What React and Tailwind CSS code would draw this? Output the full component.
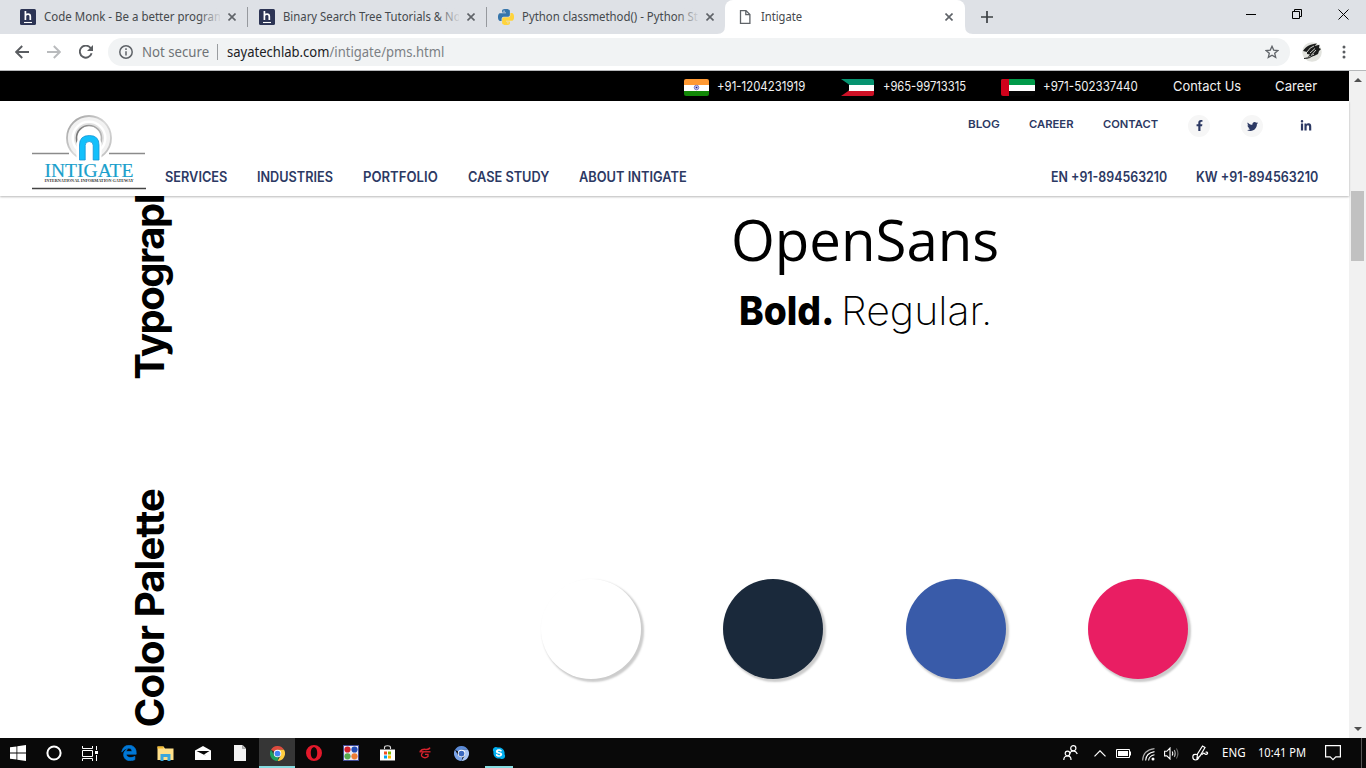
import { useLayoutEffect, useRef } from "react";
import { FaEdgeLegacy, FaFacebookF, FaLinkedinIn, FaSkype, FaTwitter } from "react-icons/fa";

/* Stretches one line of text so that it fills the width of its box. */
function Fit({ className = "", children }) {
  const box = useRef(null);
  const ink = useRef(null);
  useLayoutEffect(() => {
    const natural = ink.current.offsetWidth;
    ink.current.style.transform = `scaleX(${box.current.clientWidth / natural})`;
  }, [children]);
  return (
    <span ref={box} className={`block shrink-0 whitespace-nowrap ${className}`}>
      <span ref={ink} className="inline-block origin-left">{children}</span>
    </span>
  );
}

const PY =
  "M14.25.18l.9.2.73.26.59.3.45.32.34.34.25.34.16.33.1.3.04.26.02.2-.01.13V8.5l-.05.63-.13.55-.21.46-.26.38-.3.31-.33.25-.35.19-.35.14-.33.1-.3.07-.26.04-.21.02H8.77l-.69.05-.59.14-.5.22-.41.27-.33.32-.27.35-.2.36-.15.37-.1.35-.07.32-.04.27-.02.21v3.06H3.17l-.21-.03-.28-.07-.32-.12-.35-.18-.36-.26-.36-.36-.35-.46-.32-.59-.28-.73-.21-.88-.14-1.05-.05-1.23.06-1.22.16-1.04.24-.87.32-.71.36-.57.4-.44.42-.33.42-.24.4-.16.36-.1.32-.05.24-.01h.16l.06.01h8.16v-.83H6.18l-.01-2.75-.02-.37.05-.34.11-.31.17-.28.25-.26.31-.23.38-.2.44-.18.51-.15.58-.12.64-.1.71-.06.77-.04.84-.02 1.27.05z M9.1 2.1a1.1 1.1 0 1 0 0 2.2a1.1 1.1 0 1 0 0-2.2z";

function PythonIcon() {
  return (
    <svg width="16" height="16" viewBox="0 0 24 24" fillRule="evenodd">
      <path d={PY} fill="#3776ab" />
      <path d={PY} fill="#ffd43b" transform="rotate(180 12 12)" />
    </svg>
  );
}

function HIcon() {
  return (
    <svg width="16" height="16" viewBox="0 0 16 16">
      <rect width="16" height="16" rx="1.5" fill="#2c3454" />
      <path d="M5.4 2v9M5.4 6.8Q6 5.2 8 5.2q2.3 0 2.3 2.3V11" fill="none" stroke="#fff" strokeWidth="1.7" />
      <path d="M4 13.5h8" stroke="#fff" strokeWidth="1.1" />
    </svg>
  );
}

function FileIcon() {
  return (
    <svg width="16" height="16" viewBox="0 0 16 16" fill="none" stroke="#5f6368" strokeWidth="1.3">
      <path d="M3.5 1.6H9l3.9 3.9v8.9H3.5zM8.8 1.8v3.9h3.9" />
    </svg>
  );
}

function CloseX() {
  return (
    <svg width="8" height="8" viewBox="0 0 8 8" stroke="#5f6368" strokeWidth="1.6" className="shrink-0">
      <path d="M.5.5l7 7M7.500.5l-7 7" />
    </svg>
  );
}

function Tab({ icon, active, title, titleClass, divider }) {
  return (
    <div className={`relative flex h-[34px] shrink-0 items-center pl-[12px] ${active ? "w-[240px] rounded-t-lg bg-white" : "w-[239px]"}`}>
      {icon}
      <div className="ml-[8px] h-[20px] w-[176px] overflow-hidden">
        <Fit className={`text-[12px] leading-[20px] text-[#45494d] ${titleClass}`}>{title}</Fit>
      </div>
      {!active && <div className="absolute left-[190px] top-[7px] h-[20px] w-[24px] bg-linear-to-r from-transparent to-[#dee1e6]" />}
      <div className="relative ml-[8px]"><CloseX /></div>
      {divider && <div className="absolute -right-px top-[7px] h-[20px] w-px bg-[#96999e]" />}
      {active && (
        <>
          <svg className="absolute -left-[8px] bottom-0" width="8" height="8"><path d="M8 0v8H0Q8 8 8 0" fill="#fff" /></svg>
          <svg className="absolute -right-[8px] bottom-0" width="8" height="8"><path d="M0 0v8h8Q0 8 0 0" fill="#fff" /></svg>
        </>
      )}
    </div>
  );
}

function TabStrip() {
  return (
    <div className="flex h-[34px] bg-[#dee1e6] pl-[8px]">
      <Tab icon={<HIcon />} title="Code Monk - Be a better program" titleClass="w-[181px]" divider />
      <Tab icon={<HIcon />} title="Binary Search Tree Tutorials & Note" titleClass="w-[188px]" divider />
      <Tab icon={<PythonIcon />} title="Python classmethod() - Python Stu" titleClass="w-[183px]" />
      <Tab icon={<FileIcon />} title="Intigate" titleClass="w-[41px]" active />
      <svg className="ml-[16px] mt-[11px]" width="12" height="12" stroke="#3c4043" strokeWidth="1.7"><path d="M6 0v12M0 6h12" /></svg>
      <div className="ml-auto mr-[17px] mt-[9px] flex gap-[36px]">
        <svg width="10" height="11" stroke="#000"><path d="M0 5.500h10" /></svg>
        <svg width="10" height="11" stroke="#000" fill="none"><path d="M.5 2.500h7v7h-7zM2.500 2.500v-2h7v7h-2" /></svg>
        <svg width="11" height="11" stroke="#000"><path d="M.5.5l10 10M10.500.5l-10 10" /></svg>
      </div>
    </div>
  );
}

function Toolbar() {
  return (
    <div className="flex h-[36px] items-center bg-white pl-[15px]">
      <svg width="14" height="14" fill="none" stroke="#5a5d61" strokeWidth="1.9"><path d="M14 7H1.500M7.200 1L1.200 7l6 6" /></svg>
      <svg className="ml-[18px]" width="14" height="14" fill="none" stroke="#b9bbbd" strokeWidth="1.9"><path d="M0 7h12.500M6.800 1l6 6-6 6" /></svg>
      <svg className="ml-[18px]" width="14" height="14" viewBox="0 0 14 14" fill="none" stroke="#5a5d61" strokeWidth="1.9">
        <path d="M12.600 8.300A6 6 0 1 1 11.600 3l.9 1" /><path d="M14 0v6H8z" fill="#5a5d61" stroke="none" />
      </svg>
      <div className="ml-[15px] flex h-[28px] w-[1182px] items-center rounded-full bg-[#f1f3f4] pl-[11px]">
        <svg width="14" height="14" viewBox="0 0 14 14" fill="none" stroke="#5f6368" strokeWidth="1.5">
          <circle cx="7" cy="7" r="6.2" /><path d="M7 6.200v4.200M7 3.300v1.600" />
        </svg>
        <Fit className="ml-[9px] w-[67px] text-[14px] leading-[20px] text-[#6f7377]">Not secure</Fit>
        <div className="ml-[8px] h-[16px] w-px bg-[#9a9da0]" />
        <Fit className="ml-[9px] w-[217px] text-[14px] leading-[20px] text-[#7c8084]">
          <span className="text-[#202124]">sayatechlab.com</span>/intigate/pms.html
        </Fit>
        <svg className="ml-auto mr-[11px]" width="14" height="14" viewBox="0 0 14 14" fill="none" stroke="#5f6368" strokeWidth="1.3">
          <path d="M7 1.300l1.700 3.800 4.200.4-3.200 2.800 1 4.100L7 10.200l-3.700 2.200 1-4.100L1.100 5.500l4.200-.4z" />
        </svg>
      </div>
      <svg className="ml-[12px]" width="20" height="20" viewBox="0 0 20 20">
        <circle cx="10" cy="10" r="9.8" fill="#e2e3de" />
        <path d="M1 9C4 4 9 2 15 1.500L12.500 4l5-1.200L17 6l2 1-2 2-1 3-4 2-3 .5-5 2.500 4-4.500-3-.5 0-2z" fill="#1b1c1b" />
        <path d="M5 10Q8 5 12 4M8 11l5-4.500M9.500 13l4.500-5M4 16q5-1 8-4" stroke="#c9cac5" strokeWidth="1" fill="none" />
        <path d="M2 16.500q6 0 9-3" stroke="#1b1c1b" strokeWidth="1" fill="none" />
      </svg>
      <svg className="ml-[20px]" width="4" height="14" fill="#5a5d61">
        <circle cx="2" cy="2" r="1.5" /><circle cx="2" cy="7" r="1.5" /><circle cx="2" cy="12" r="1.5" />
      </svg>
    </div>
  );
}

function TopBar() {
  return (
    <div className="flex h-[30px] items-center bg-black pl-[684px] font-['Inter'] text-[13.5px] leading-[20px] text-[#f2f2f2]">
      <svg width="25" height="17" viewBox="0 0 25 17" className="mt-[3px] shrink-0 rounded-[2px]">
        <path d="M0 0h25v6H0z" fill="#ff9933" /><path d="M0 6h25v6H0z" fill="#fff" /><path d="M0 12h25v5H0z" fill="#128807" />
        <circle cx="12.5" cy="8.5" r="2.3" fill="#b9b9e6" stroke="#7777c4" strokeWidth=".9" /><circle cx="12.5" cy="8.5" r=".8" fill="#1a1a8c" />
      </svg>
      <Fit className="ml-[8px] w-[88px]">+91-1204231919</Fit>
      <svg width="33" height="17" viewBox="0 0 33 17" className="ml-[36px] mt-[3px] shrink-0 rounded-r-[2px]">
        <path d="M0 0h33v6H0z" fill="#069370" /><path d="M0 6h33v6H0z" fill="#fff" /><path d="M0 12h33v5H0z" fill="#ce1126" />
        <path d="M0 0l8 5.500v6L0 17z" fill="#000" />
      </svg>
      <Fit className="ml-[9px] w-[83px]">+965-99713315</Fit>
      <svg width="34" height="17" viewBox="0 0 34 17" className="ml-[35px] mt-[3px] shrink-0 rounded-[2px]">
        <path d="M0 0h34v6H0z" fill="#009a49" /><path d="M0 6h34v6H0z" fill="#fff" /><path d="M0 12h34v5H0z" fill="#050505" />
        <path d="M0 0h8v17H0z" fill="#d0021b" />
      </svg>
      <Fit className="ml-[8px] w-[95px]">+971-502337440</Fit>
      <Fit className="ml-[34.5px] w-[67.5px]">Contact Us</Fit>
      <Fit className="ml-[35px] w-[41.5px]">Career</Fit>
    </div>
  );
}

function Logo() {
  return (
    <svg width="116" height="76" viewBox="0 0 116 76">
      <defs>
        <linearGradient id="ring" x1="0" y1="0" x2="1" y2="1"><stop offset="0" stopColor="#9a9a9a" /><stop offset=".5" stopColor="#d8d8d8" /><stop offset="1" stopColor="#bdbdbd" /></linearGradient>
        <linearGradient id="ring2" x1="0" y1="0" x2="1" y2="0"><stop offset="0" stopColor="#777" /><stop offset="1" stopColor="#b5b5b5" /></linearGradient>
      </defs>
      <path d="M1 39.500h37M78 39.500h36" stroke="#8b8b8b" strokeWidth="1.5" />
      <circle cx="58" cy="24" r="20" fill="none" stroke="#f2f2f2" strokeWidth="5" />
      <circle cx="58" cy="24" r="22" fill="none" stroke="url(#ring)" strokeWidth="1.8" />
      <circle cx="58" cy="24" r="13.5" fill="none" stroke="#e2e2e2" strokeWidth="3" />
      <circle cx="58" cy="24" r="12.5" fill="none" stroke="url(#ring2)" strokeWidth="1.6" />
      <path d="M45.500 48V31a12.500 12 0 0 1 25 0v17z" fill="#fff" />
      <path d="M48.500 46V31q0-9.500 9.800-9.500T68 31v15h-5.800V31.500q0-4-4-4t-4 4V46z" fill="#12c0fb" stroke="#1494d6" strokeWidth=".8" />
      <text x="13.500" y="62.500" textLength="89" lengthAdjust="spacingAndGlyphs" fontFamily="Liberation Serif" fontSize="19" fontWeight="400" fill="#1b9fcc" stroke="#1b9fcc" strokeWidth=".2">INTIGATE</text>
      <text x="13.500" y="68" textLength="89" lengthAdjust="spacingAndGlyphs" fontFamily="Liberation Serif" fontSize="4.5" fontWeight="bold" fill="#333">INTERNATIONAL INFORMATION GATEWAY</text>
      <path d="M1 74.500h114" stroke="#444" strokeWidth="1.5" />
    </svg>
  );
}

function Header() {
  return (
    <header className="relative flex h-[95px] bg-white pl-[31px] font-['Inter'] font-semibold text-[#2c3963] shadow-[0_1px_2px_rgba(0,0,0,0.28)]">
      <div className="mt-[13px] w-[116px] shrink-0"><Logo /></div>
      <div className="flex flex-1 flex-col">
        <div className="flex h-[50px] pl-[820.5px] text-[11px] leading-[16px]">
          <Fit className="mt-[15px] w-[31.500px]">BLOG</Fit>
          <Fit className="ml-[30px] mt-[15px] w-[44.500px]">CAREER</Fit>
          <Fit className="ml-[29.500px] mt-[15px] w-[55px]">CONTACT</Fit>
          <span className="ml-[30px] mt-[14px] flex size-[22px] items-center justify-center rounded-full bg-[#f6f6f6]"><FaFacebookF size={11} className="-mt-px" /></span>
          <span className="ml-[31px] mt-[14px] flex size-[22px] items-center justify-center rounded-full bg-[#f6f6f6]"><FaTwitter size={11} /></span>
          <span className="ml-[31px] mt-[14px] flex size-[22px] items-center justify-center rounded-full pl-px"><FaLinkedinIn size={12} /></span>
        </div>
        <nav className="mt-[16px] flex pl-[18px] text-[14px] leading-[20px]">
          <Fit className="w-[62px]">SERVICES</Fit>
          <Fit className="ml-[30px] w-[76px]">INDUSTRIES</Fit>
          <Fit className="ml-[30px] w-[75px]">PORTFOLIO</Fit>
          <Fit className="ml-[30px] w-[81px]">CASE STUDY</Fit>
          <Fit className="ml-[29.5px] w-[108px]">ABOUT INTIGATE</Fit>
          <Fit className="ml-[364px] w-[116px]">EN +91-894563210</Fit>
          <Fit className="ml-[29.5px] w-[122px]">KW +91-894563210</Fit>
        </nav>
      </div>
    </header>
  );
}

/* Upright heading that reads from bottom to top. */
function SideTitle({ className, children }) {
  return (
    <div className={`flex w-[48px] items-start whitespace-nowrap font-['Inter'] text-[40px] font-bold leading-[48px] text-black ${className}`}>
      <span className="rotate-180 [writing-mode:vertical-rl]">{children}</span>
    </div>
  );
}

function Content() {
  return (
    <main className="flex-1 overflow-hidden bg-white">
      <section className="flex h-[250px] pl-[126px]">
        <div className="flex h-[184px] flex-col justify-end overflow-hidden"><SideTitle className="tracking-[-1.5px]">Typography</SideTitle></div>
        <div className="flex flex-1 flex-col pl-[557px]">
          <Fit className="mt-[8px] w-[267.5px] font-['Open_Sans'] text-[57px] leading-[70px] text-black">OpenSans</Fit>
          <div className="mt-[12px] flex pl-[8px] font-['Inter'] text-[40px] leading-[50px] text-black">
            <Fit className="w-[95px] font-extrabold">Bold.</Fit>
            <Fit className="ml-[7px] w-[151px] font-extralight">Regular.</Fit>
          </div>
        </div>
      </section>
      <section className="flex h-[292px] pl-[126px]">
        <div className="flex h-[281px] flex-col justify-end"><SideTitle className="tracking-[-0.9px]">Color Palette</SideTitle></div>
        <div className="flex gap-[82.4px] pl-[367px] pt-[133px]">
          <div className="size-[100px] rounded-full bg-white shadow-[2px_2px_2px_1px_#cccccc]" />
          <div className="size-[100px] rounded-full bg-[#1a293b] shadow-[2px_2px_2px_1px_#cccccc]" />
          <div className="size-[100px] rounded-full bg-[#395ba9] shadow-[2px_2px_2px_1px_#cccccc]" />
          <div className="size-[100px] rounded-full bg-[#e91e63] shadow-[2px_2px_2px_1px_#cccccc]" />
        </div>
      </section>
    </main>
  );
}

function Scrollbar() {
  return (
    <div className="flex w-[17px] shrink-0 flex-col items-center bg-[#f1f1f1]">
      <svg className="mt-[7px]" width="8" height="4" fill="#505050"><path d="M0 4l4-4 4 4z" /></svg>
      <div className="mt-[109px] h-[70px] w-[13px] bg-[#c1c1c1]" />
      <svg className="mb-[7px] mt-auto" width="8" height="4" fill="#505050"><path d="M0 0l4 4 4-4z" /></svg>
    </div>
  );
}

function ChromeIcon({ blue }) {
  const c = blue ? ["#5b8ad6", "#a9c6f5", "#7ba5ea", "#3a69c0"] : ["#dd4b3e", "#ffcd40", "#1da05f", "#4385f4"];
  return (
    <svg width="15" height="15" viewBox="0 0 24 24">
      <path d="M12 12L1.600 6A12 12 0 0 1 22.400 6H12z" fill={c[0]} />
      <path d="M12 6h10.400A12 12 0 0 1 12 24l5.200-9z" fill={c[1]} />
      <path d="M1.600 6l5.200 9q2 3 7 2.500L12 24A12 12 0 0 1 1.600 6z" fill={c[2]} />
      <circle cx="12" cy="12" r="6" fill="#fff" /><circle cx="12" cy="12" r="4.6" fill={c[3]} />
    </svg>
  );
}

function Slot({ className = "w-[37px]", children }) {
  return <div className={`flex h-full shrink-0 items-center justify-center ${className}`}>{children}</div>;
}

function Taskbar() {
  return (
    <footer className="flex h-[30px] items-center bg-[#090909] text-white">
      <Slot className="w-[36px]">
        <svg width="16" height="16" fill="#fff"><path d="M0 2.300l6.500-.9v6.200H0zM7.300 1.200L16 0v7.600H7.300zM0 8.400h6.500v6.200L0 13.700zM7.300 8.400H16V16l-8.700-1.200z" /></svg>
      </Slot>
      <Slot className="w-[36px]">
        <svg width="16" height="16" fill="none" stroke="#fff" strokeWidth="2"><circle cx="8" cy="8" r="6.6" /></svg>
      </Slot>
      <Slot className="mr-[2px] w-[36px]">
        <svg width="16" height="15" viewBox="0 0 16 15" fill="none" stroke="#fff"><path d="M.5 0v2.500h10V0M.5 15v-2.500h10V15M.5 4.500h10v6H.5zM14.500 0v4M14.500 9v6" /><path d="M13 5h3v3h-3z" fill="#fff" stroke="none" /></svg>
      </Slot>
      <Slot><FaEdgeLegacy size={16} color="#0078d7" stroke="#0078d7" strokeWidth="22" /></Slot>
      <Slot>
        <svg width="17" height="15" viewBox="0 0 17 15">
          <path d="M.5.5h6l1.500 2h8.500V14H.5z" fill="#ffe08a" /><path d="M.5.5h6V2.500h-6z" fill="#f3b92c" />
          <path d="M3.500 15V8h10v7h-3v-4h-4v4z" fill="#3ba7dc" />
        </svg>
      </Slot>
      <Slot>
        <svg width="16" height="14" viewBox="0 0 16 14"><path d="M0 4.500L8 0l8 4.500V14H0z" fill="#fff" /><path d="M1.500 5h13L9 8.500l2.500 1.500L1.500 5" fill="#090909" /></svg>
      </Slot>
      <Slot>
        <svg width="12" height="16" viewBox="0 0 12 16"><path d="M0 0h8.500L12 3.500V16H0z" fill="#f3f3f3" /><path d="M8.500 0v3.500H12" fill="#bbb" stroke="#888" strokeWidth=".6" /></svg>
      </Slot>
      <Slot className="ml-px w-[36px] border-b-2 border-[#85dbe0] bg-[#363636] pt-[2px]"><ChromeIcon /></Slot>
      <Slot>
        <svg width="16" height="16" viewBox="0 0 16 16"><path fillRule="evenodd" d="M8 0a8 8 0 1 0 0 16A8 8 0 1 0 8 0zM8 2.300c2 0 3.200 2.400 3.200 5.700S10 13.700 8 13.700 4.800 11.300 4.800 8 6 2.300 8 2.300z" fill="#e3192b" /></svg>
      </Slot>
      <Slot>
        <svg width="16" height="16" viewBox="0 0 16 16">
          <rect width="16" height="16" rx="1" fill="#e9eaf6" /><rect x=".5" y=".5" width="15" height="15" fill="none" stroke="#404a96" />
          <circle cx="4.5" cy="4.5" r="3.1" fill="#d3202a" /><circle cx="11.5" cy="4.5" r="3.1" fill="#204bb5" />
          <circle cx="4.5" cy="11.3" r="3.1" fill="#57aa4d" /><circle cx="11.5" cy="11.3" r="3.1" fill="#ed7c35" />
        </svg>
      </Slot>
      <Slot>
        <svg width="15" height="16" viewBox="0 0 15 16">
          <path d="M4.500 4V2.500Q4.500.8 7.500.8t3 1.700V4" fill="none" stroke="#ddd" strokeWidth="1.1" /><path d="M0 4.500h15V15.500H0z" fill="#fff" />
          <path d="M4 6.500h3v3H4z" fill="#f25022" /><path d="M8 6.500h3v3H8z" fill="#7fba00" /><path d="M4 10.500h3v3H4z" fill="#00a4ef" /><path d="M8 10.500h3v3H8z" fill="#ffb900" />
        </svg>
      </Slot>
      <Slot>
        <svg width="12" height="12" viewBox="0 0 12 12" fill="none" stroke="#d9232e">
          <path d="M1 4.500Q3 2 6.500 2.400T11 .6" strokeWidth="1.5" /><path d="M.5 4.800h11" strokeWidth="1.300" />
          <path d="M4.300 5.200Q1.500 7 3 9.500q3 2.500 6 0V7.300H6" strokeWidth="1.300" />
        </svg>
      </Slot>
      <Slot><ChromeIcon blue /></Slot>
      <Slot className="relative w-[37px]">
        <svg width="14" height="14" viewBox="0 0 14 14"><circle cx="7" cy="7" r="4.7" fill="#fff" /><FaSkype size={14} color="#00aff0" /></svg>
        <div className="absolute bottom-0 h-[2px] w-[28px] bg-[#85dbe0]" />
      </Slot>
      <div className="ml-auto flex h-full items-center">
        <svg className="-mr-px" width="15" height="16" viewBox="0 0 15 16" fill="none" stroke="#fff" strokeWidth="1.2">
          <circle cx="10.3" cy="3.3" r="2.6" /><path d="M6.800 8.500Q7.500 6 10.300 6T14.300 9" />
          <circle cx="4.5" cy="8.5" r="2.3" /><path d="M.8 15q0-4 3.700-4T8 15" />
        </svg>
        <svg className="ml-[17px] mr-[-1px]" width="12" height="7" fill="none" stroke="#fff" strokeWidth="1.2"><path d="M.5 6.300L6 .8l5.500 5.500" /></svg>
        <svg className="ml-[11px]" width="15" height="9" viewBox="0 0 15 9"><path d="M.5.5h13v8H.5z" fill="none" stroke="#fff" /><path d="M2 2h10v5H2zM13.500 2.500H15v4h-1.500z" fill="#fff" /></svg>
        <svg className="ml-[11px] mt-[2px]" width="13" height="13" viewBox="0 0 13 13" fill="none" stroke="#fff" strokeWidth="1.1">
          <path d="M.6 12.500Q1 2 12.500.6" stroke="#aaa" /><path d="M3.600 12.500Q4 5 12.500 3.600M6.600 12.500Q7 8 12.500 6.800" /><circle cx="11" cy="11" r="1.5" fill="#fff" stroke="none" />
        </svg>
        <svg className="ml-[9px]" width="17" height="13" viewBox="0 0 17 13" fill="none" stroke="#fff" strokeWidth="1.1">
          <path d="M.6 4.300h2.200L6 1v11L2.800 8.900H.6zM8.200 4.500Q9.300 6.500 8.200 8.500" /><path d="M10.300 3q2 3.500 0 7" stroke="#aaa" /><path d="M12.400 1.500q3 5 0 10" stroke="#666" />
        </svg>
        <svg className="ml-[11px]" width="17" height="16" viewBox="0 0 17 16" fill="none" stroke="#fff" strokeWidth="1.2">
          <path d="M5 9.500Q.8 8.500.8 12q0 3 3 3 2 0 3.200-2.500M9.500 10q2-2.500 3-1.500t1.500.8q2-.3 1.500-1.500t-2-.5" /><path d="M5 13.500l.5-4.500L10.500 1l2.500 1.500-5 8.500z" />
        </svg>
        <Fit className="ml-[13px] w-[24px] text-[12px]">ENG</Fit>
        <Fit className="ml-[12px] w-[48px] text-[12px]">10:41 PM</Fit>
        <svg className="ml-[19px]" width="16" height="16" viewBox="0 0 16 16" fill="none" stroke="#fff" strokeWidth="1.2"><path d="M.6.6h14.800v11.200h-4.600L8 14.600l-2.800-2.800H.6z" /></svg>
        <div className="ml-[20px] mr-[4px] h-full w-px bg-[#555]" />
      </div>
    </footer>
  );
}

export default function App() {
  return (
    <div className="flex h-[768px] w-[1366px] flex-col overflow-hidden bg-white font-['Noto_Sans',sans-serif]">
      <TabStrip />
      <Toolbar />
      <div className="h-px bg-[#b6b8ba]" />
      <div className="flex h-[667px]">
        <div className="flex w-[1349px] shrink-0 flex-col">
          <TopBar />
          <Header />
          <Content />
        </div>
        <Scrollbar />
      </div>
      <Taskbar />
    </div>
  );
}
